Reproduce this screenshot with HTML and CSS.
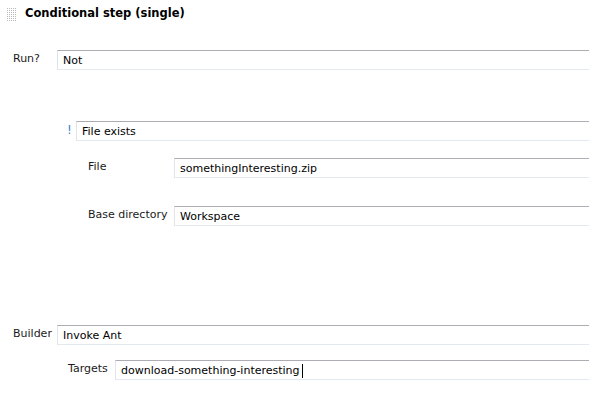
FILE: index.html
```html
<!DOCTYPE html>
<html>
<head>
<meta charset="utf-8">
<link rel="stylesheet" href="styles.css">
</head>
<body>
<div class="page">
  <div class="header">
    <svg class="grip" width="10" height="13" viewBox="0 0 10 13">
      <defs>
        <pattern id="dots" width="2" height="2" patternUnits="userSpaceOnUse">
          <rect width="1" height="1" fill="#b8b8b8"/>
        </pattern>
      </defs>
      <rect width="10" height="13" fill="url(#dots)"/>
    </svg>
    <span class="title">Conditional step (single)</span>
  </div>

  <div class="row row-run">
    <div class="label l-run">Run?</div>
    <div class="field">Not</div>
  </div>

  <div class="row row-cond">
    <div class="label l-bang">!</div>
    <div class="field">File exists</div>
  </div>

  <div class="row row-file">
    <div class="label l-file">File</div>
    <div class="field">somethingInteresting.zip</div>
  </div>

  <div class="row row-base">
    <div class="label l-file">Base directory</div>
    <div class="field">Workspace</div>
  </div>

  <div class="row row-builder">
    <div class="label l-run">Builder</div>
    <div class="field">Invoke Ant</div>
  </div>

  <div class="row row-targets">
    <div class="label l-targets">Targets</div>
    <div class="field">download-something-interesting<span class="caret"></span></div>
  </div>
</div>
</body>
</html>
```
FILE: styles.css
```css
html, body {
  margin: 0;
  padding: 0;
  background: #fff;
  overflow: hidden;
}
body {
  font-family: "DejaVu Sans", Verdana, sans-serif;
  font-size: 11px;
  color: #000;
}
.page {
  width: 589px;
  height: 405px;
}
.header {
  height: 28px;
  display: flex;
  align-items: flex-start;
}
.grip {
  margin: 8px 0 0 7px;
  flex: none;
}
.title {
  font-weight: bold;
  font-size: 11.5px;
  margin: 6px 0 0 8px;
  line-height: 15px;
}
.row {
  display: flex;
  align-items: flex-start;
  height: 20px;
}
.label {
  flex: none;
  line-height: 14px;
  padding-top: 2px;
  color: #1a1a1a;
}
.l-run { margin-left: 13px; width: 44px; }
.l-bang { margin-left: 67px; width: 9px; color: #3a86cc; font-size: 12px; }
.l-file { margin-left: 88px; width: 86px; }
.l-targets { margin-left: 68px; width: 47px; }
.field {
  flex: 1;
  margin-right: -10px;
  box-sizing: content-box;
  border: 1px solid;
  border-color: #abadb3 #e2e3ea #e3e9ef #e2e3ea;
  padding-left: 5px;
  padding-top: 1px;
  height: 17px;
  line-height: 17px;
  font-size: 11px;
  color: #000;
  white-space: nowrap;
  display: flex;
  align-items: center;
}
.caret {
  display: inline-block;
  width: 1px;
  height: 14px;
  background: #000;
  margin-left: 2px;
}
.row-run { margin-top: 22px; }
.row-cond { margin-top: 51px; }
.row-file { margin-top: 17px; }
.row-base { margin-top: 28px; }
.row-builder { margin-top: 99px; }
.row-targets { margin-top: 15px; }
```
